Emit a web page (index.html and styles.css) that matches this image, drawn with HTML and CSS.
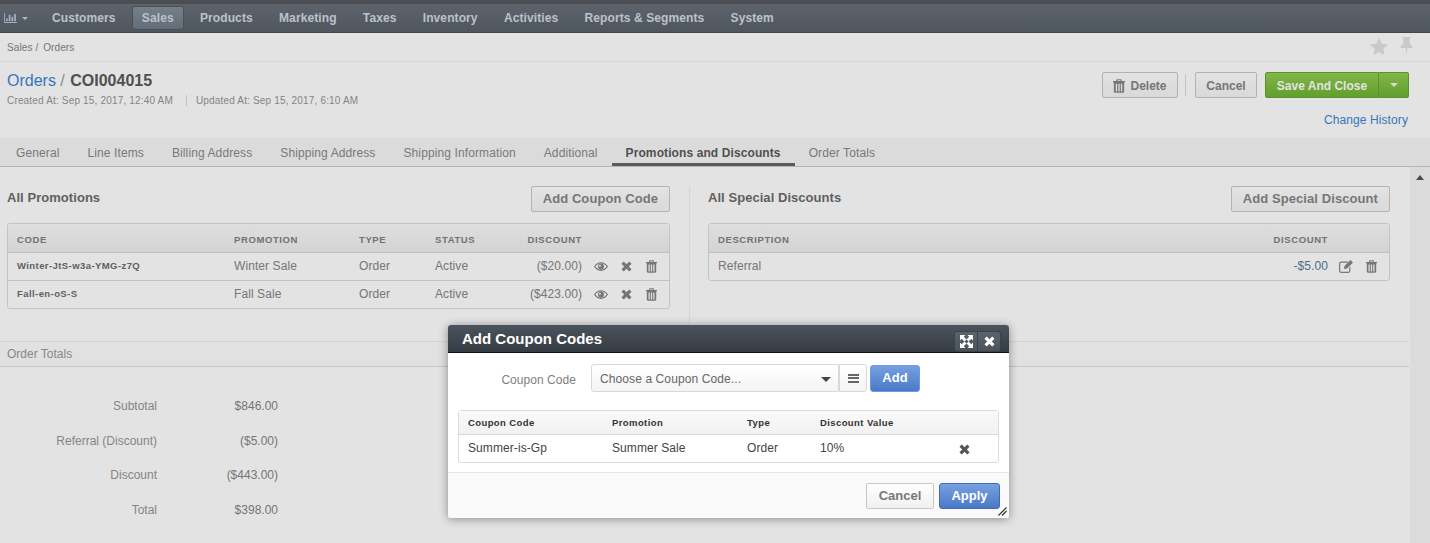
FILE: index.html
```html
<!DOCTYPE html>
<html lang="en">
<head>
    <meta charset="UTF-8">
    <meta name="viewport" content="width=device-width, initial-scale=1.0">
    <title>Orders - COI004015</title>
    <link rel="stylesheet" href="styles.css">
</head>
<body>

<svg class="sprite" xmlns="http://www.w3.org/2000/svg">
    <symbol id="i-trash" viewBox="0 0 14 16">
        <path d="M4.500 0h5l1 2.200H14V4h-1v10.500c0 .8-.6 1.500-1.400 1.500H2.400C1.600 16 1 15.300 1 14.500V4H0V2.200h3.500zM5.400 1.300l-.4.9h4l-.4-.9zM3.200 5.500v8.800h1.600V5.500zM6.200 5.500v8.800h1.600V5.500zM9.200 5.500v8.800h1.600V5.500z" fill-rule="evenodd"/>
    </symbol>
    <symbol id="i-times" viewBox="0 0 12 12">
        <path d="M3 .5l3 3 3-3L11.500 3l-3 3 3 3L9 11.500l-3-3-3 3L.5 9l3-3-3-3z"/>
    </symbol>
    <symbol id="i-eye" viewBox="0 0 16 10">
        <path d="M8 0c3.400 0 6.300 2 8 5-1.700 3-4.600 5-8 5s-6.300-2-8-5c1.700-3 4.600-5 8-5zM1.500 5C3 2.800 5.300 1.300 8 1.300S13 2.800 14.500 5C13 7.200 10.700 8.700 8 8.700S3 7.200 1.500 5zM8 1.600a3.400 3.400 0 1 0 0 6.800 3.400 3.400 0 0 0 0-6.800zM6.800 3a1.100 1.100 0 1 1-1.100 1.100A1.100 1.100 0 0 1 6.800 3z" fill-rule="evenodd"/>
    </symbol>
    <symbol id="i-edit" viewBox="0 0 14 13">
        <path d="M2 1.500h7.500L8.300 2.700H2.200c-.5 0-1 .4-1 1v7c0 .6.500 1 1 1h7c.6 0 1-.4 1-1V7.800l1.200-1.200v4.200c0 1.200-1 2.200-2.200 2.200H2.200C1 13 0 12 0 10.800V3.700C0 2.500 1 1.500 2 1.500zM11.500 0L14 2.500 8 8.500 5 9l.5-3z" fill-rule="evenodd"/>
    </symbol>
</svg>

<div class="top-strip"></div>

<nav class="main-nav">
    <a class="nav-chart">
        <svg class="chart-icon" viewBox="0 0 14 11"><path d="M0 0h1v10h13v1H0zM2 6h2v3H2zM5 2h2v7H5zM8 4h2v5H8zM11 1h2v8h-2z"/></svg>
        <span class="caret caret-nav"></span>
    </a>
    <a class="nav-item">Customers</a>
    <a class="nav-item active">Sales</a>
    <a class="nav-item">Products</a>
    <a class="nav-item">Marketing</a>
    <a class="nav-item">Taxes</a>
    <a class="nav-item">Inventory</a>
    <a class="nav-item">Activities</a>
    <a class="nav-item">Reports &amp; Segments</a>
    <a class="nav-item">System</a>
</nav>

<div class="breadcrumb-bar">
    <div class="breadcrumb">Sales / <span class="crumb-last">Orders</span></div>
    <div class="fav-icons">
        <svg class="star-icon" viewBox="0 0 18 17"><path d="M9 0l2.700 5.800 6.300.7-4.700 4.300 1.300 6.200L9 13.900 3.400 17l1.300-6.200L0 6.500l6.300-.7z"/></svg>
        <svg class="pin-icon" viewBox="0 0 13 18"><path d="M2.500 0h8v1.500H9.500V7c1.900.9 3 2.200 3 4H7.300l-.8 7-.8-7H.5c0-1.800 1.100-3.100 3-4V1.500h-1z"/></svg>
    </div>
</div>

<header class="page-head">
    <div class="head-left">
        <h1 class="page-title"><a>Orders</a> <span class="slash">/</span> <b>COI004015</b></h1>
        <div class="page-meta">
            <span>Created At: Sep 15, 2017, 12:40 AM</span>
            <span class="meta-updated">Updated At: Sep 15, 2017, 6:10 AM</span>
        </div>
    </div>
    <div class="head-right">
        <div class="head-actions">
            <button class="btn btn-delete"><svg class="icon-trash-btn"><use href="#i-trash"/></svg>Delete</button>
            <span class="actions-sep"></span>
            <button class="btn btn-cancel">Cancel</button>
            <div class="btn-split">
                <button class="btn-save">Save And Close</button>
                <button class="btn-save-caret"><span class="caret caret-white"></span></button>
            </div>
        </div>
        <a class="history-link">Change History</a>
    </div>
</header>

<div class="tabs">
    <a class="tab">General</a>
    <a class="tab">Line Items</a>
    <a class="tab">Billing Address</a>
    <a class="tab">Shipping Address</a>
    <a class="tab">Shipping Information</a>
    <a class="tab">Additional</a>
    <a class="tab active">Promotions and Discounts</a>
    <a class="tab">Order Totals</a>
</div>

<div class="content-wrap">
    <main class="content">
        <div class="panels">
            <section class="panel panel-left">
                <div class="panel-head">
                    <h2>All Promotions</h2>
                    <button class="btn-big">Add Coupon Code</button>
                </div>
                <table class="grid grid-promos">
                    <thead>
                        <tr><th>Code</th><th>Promotion</th><th>Type</th><th>Status</th><th class="num">Discount</th><th></th></tr>
                    </thead>
                    <tbody>
                        <tr>
                            <td class="code">Winter-JtS-w3a-YMG-z7Q</td><td>Winter Sale</td><td>Order</td><td>Active</td><td class="num">($20.00)</td>
                            <td class="row-icons"><svg class="ico-eye"><use href="#i-eye"/></svg><svg class="ico-x"><use href="#i-times"/></svg><svg class="ico-trash"><use href="#i-trash"/></svg></td>
                        </tr>
                        <tr>
                            <td class="code">Fall-en-oS-S</td><td>Fall Sale</td><td>Order</td><td>Active</td><td class="num">($423.00)</td>
                            <td class="row-icons"><svg class="ico-eye"><use href="#i-eye"/></svg><svg class="ico-x"><use href="#i-times"/></svg><svg class="ico-trash"><use href="#i-trash"/></svg></td>
                        </tr>
                    </tbody>
                </table>
            </section>
            <section class="panel panel-right">
                <div class="panel-head">
                    <h2>All Special Discounts</h2>
                    <button class="btn-big">Add Special Discount</button>
                </div>
                <table class="grid grid-special">
                    <thead>
                        <tr><th>Description</th><th class="num">Discount</th><th></th></tr>
                    </thead>
                    <tbody>
                        <tr>
                            <td>Referral</td><td class="num blue-num">-$5.00</td>
                            <td class="row-icons"><svg class="ico-edit"><use href="#i-edit"/></svg><svg class="ico-trash"><use href="#i-trash"/></svg></td>
                        </tr>
                    </tbody>
                </table>
            </section>
        </div>

        <div class="section-title">Order Totals</div>
        <dl class="totals">
            <div class="total-row"><dt>Subtotal</dt><dd>$846.00</dd></div>
            <div class="total-row"><dt>Referral (Discount)</dt><dd>($5.00)</dd></div>
            <div class="total-row"><dt>Discount</dt><dd>($443.00)</dd></div>
            <div class="total-row"><dt>Total</dt><dd>$398.00</dd></div>
        </dl>
    </main>
    <aside class="scrollbar"><span class="scroll-up"></span></aside>
</div>

<div class="overlay"></div>

<div class="dialog">
    <div class="dialog-title">
        <span>Add Coupon Codes</span>
        <div class="dialog-tools">
            <button class="tool-btn">
                <svg class="ico-expand" viewBox="0 0 13 13"><path d="M0 0h5.500L3.800 1.700 6.500 4.400 4.400 6.500 1.700 3.800 0 5.500zM13 0v5.500l-1.700-1.700-2.700 2.700-2.100-2.100 2.700-2.700L7.500 0zM0 13V7.500l1.700 1.700 2.700-2.700 2.100 2.100-2.700 2.700L5.500 13zM13 13H7.500l1.700-1.700-2.700-2.700 2.100-2.100 2.700 2.700L13 7.500z"/></svg>
            </button>
            <button class="tool-btn"><svg class="ico-close"><use href="#i-times"/></svg></button>
        </div>
    </div>
    <div class="dialog-body">
        <div class="coupon-row">
            <label class="coupon-label">Coupon Code</label>
            <div class="coupon-select">
                <span>Choose a Coupon Code...</span>
                <span class="caret caret-dark"></span>
            </div>
            <button class="list-btn"><span class="bars"></span></button>
            <button class="btn-blue btn-add">Add</button>
        </div>
        <table class="grid grid-coupons">
            <thead>
                <tr><th>Coupon Code</th><th>Promotion</th><th>Type</th><th>Discount Value</th><th></th></tr>
            </thead>
            <tbody>
                <tr>
                    <td>Summer-is-Gp</td><td>Summer Sale</td><td>Order</td><td>10%</td>
                    <td><svg class="ico-remove"><use href="#i-times"/></svg></td>
                </tr>
            </tbody>
        </table>
    </div>
    <div class="dialog-foot">
        <button class="btn-plain">Cancel</button>
        <button class="btn-blue btn-apply">Apply</button>
    </div>
    <svg class="resize-grip" viewBox="0 0 9 9"><path d="M8.500 0.500l-8 8M8.500 4l-4.500 4.500" stroke="#333" stroke-width="1.200" fill="none"/></svg>
</div>

</body>
</html>
```

FILE: styles.css
```css
* {
    box-sizing: border-box;
}
html, body {
    height: 543px;
    overflow: hidden;
}
body {
    font-family: "Liberation Sans", Arial, sans-serif;
    font-size: 12px;
    margin: 0;
    background: #fff;
    color: #666;
    position: relative;
}
button {
    font-family: inherit;
    cursor: pointer;
}
.sprite {
    display: none;
}
.caret {
    display: inline-block;
    width: 0;
    height: 0;
    border-left: 4px solid transparent;
    border-right: 4px solid transparent;
    border-top: 4px solid #fff;
}

/* top bar */
.top-strip {
    height: 4px;
    background: #55595f;
}
.main-nav {
    height: 29px;
    display: flex;
    align-items: center;
    padding-left: 4px;
    background: linear-gradient(#687079, #5a6169);
    border-bottom: 1px solid #4a4f55;
}
.nav-chart {
    display: flex;
    align-items: center;
    gap: 5px;
    width: 38px;
    color: #c4cdd6;
}
.chart-icon {
    width: 13px;
    height: 10px;
    fill: #b5c4d6;
}
.caret-nav {
    border-left-width: 3px;
    border-right-width: 3px;
    border-top: 3px solid #c4cdd6;
}
.nav-item {
    font-size: 12px;
    font-weight: bold;
    letter-spacing: .1px;
    color: #d3dae1;
    padding: 4px 9px;
    margin: 0 6.250px 0 0;
    border: 1px solid transparent;
    border-radius: 3px;
    white-space: nowrap;
}
.nav-item.active {
    background: linear-gradient(#84909b, #6f7a85);
    border-color: #535a62;
}

/* breadcrumb */
.breadcrumb-bar {
    height: 29px;
    display: flex;
    justify-content: space-between;
    align-items: center;
    padding: 0 17px 0 7px;
    background: #fff;
    border-bottom: 1px solid #f3f3f3;
}
.breadcrumb {
    font-size: 10px;
    letter-spacing: .1px;
    color: #858585;
}
.crumb-last {
    margin-left: 2px;
}
.fav-icons {
    display: flex;
    align-items: center;
    gap: 12px;
    margin-top: -2px;
}
.star-icon {
    width: 18px;
    height: 17px;
    fill: #e2e2e2;
}
.pin-icon {
    width: 13px;
    height: 18px;
    fill: #e2e2e2;
}

/* page head */
.page-head {
    height: 76px;
    display: flex;
    justify-content: space-between;
    padding: 10px 21px 0 7px;
}
.page-title {
    font-size: 16px;
    font-weight: normal;
    margin: 0;
    line-height: 18px;
    color: #999;
}
.page-title a {
    color: #3a86d4;
}
.page-title b {
    color: #5a5a5a;
    margin-left: 1px;
}
.page-meta {
    font-size: 10px;
    letter-spacing: .17px;
    color: #959595;
    margin-top: 5px;
    display: flex;
}
.meta-updated {
    margin-left: 13px;
    padding-left: 9px;
    border-left: 1px solid #ddd;
}
.head-right {
    display: flex;
    flex-direction: column;
    align-items: flex-end;
}
.head-actions {
    display: flex;
    align-items: center;
}
.btn {
    height: 26px;
    padding: 1px 0 0;
    font-size: 12px;
    font-weight: bold;
    color: #858585;
    background: linear-gradient(#fff, #f4f4f4);
    border: 1px solid #c8c8c8;
    border-radius: 2px;
    display: flex;
    align-items: center;
    justify-content: center;
}
.btn-delete {
    width: 76px;
}
.icon-trash-btn {
    width: 12px;
    height: 14px;
    margin-right: 5px;
    fill: #858585;
}
.actions-sep {
    width: 1px;
    height: 22px;
    background: #ddd;
    margin: 0 9px 0 7px;
}
.btn-cancel {
    width: 62px;
}
.btn-split {
    display: flex;
    height: 26px;
    margin-left: 8px;
}
.btn-save, .btn-save-caret {
    height: 26px;
    font-size: 12px;
    font-weight: bold;
    color: #fff;
    background: linear-gradient(#92ce4e, #6eb334);
    border: 1px solid #69a336;
}
.btn-save {
    width: 114px;
    padding: 1px 0 0;
    border-radius: 2px 0 0 2px;
}
.btn-save-caret {
    width: 30px;
    border-left: 0;
    border-radius: 0 2px 2px 0;
    padding: 0;
    display: flex;
    align-items: center;
    justify-content: center;
}
.caret-white {
    border-top-color: #f2f2f2;
}
.history-link {
    font-size: 12px;
    letter-spacing: .1px;
    color: #3a86d4;
    margin: 15px 1px 0 0;
}

/* tabs */
.tabs {
    height: 29px;
    display: flex;
    padding-left: 2px;
    background: #f7f7f7;
    border-bottom: 1px solid #ccc;
}
.tab {
    height: 28px;
    line-height: 30px;
    padding: 0 14px;
    font-size: 12px;
    letter-spacing: .11px;
    color: #888;
    white-space: nowrap;
}
.tab.active {
    font-weight: bold;
    color: #5a5a5a;
    letter-spacing: .1px;
    border-bottom: 3px solid #666;
}

/* content */
.content-wrap {
    display: flex;
    height: 376px;
}
.content {
    flex: 1;
    min-width: 0;
}
.scrollbar {
    width: 20px;
    background: #f7f7f7;
    margin-left: 1px;
    display: flex;
    justify-content: center;
    padding-top: 8px;
}
.scroll-up {
    width: 0;
    height: 0;
    border-left: 4.500px solid transparent;
    border-right: 4.500px solid transparent;
    border-bottom: 5px solid #555;
}
.panels {
    display: flex;
    height: 174px;
    padding-top: 19px;
}
.panel-left {
    width: 690px;
    padding: 0 19px 0 7px;
    border-right: 1px solid #f0f0f0;
    height: 139px;
}
.panel-right {
    flex: 1;
    padding: 0 19px 0 18px;
}
.panel-head {
    display: flex;
    justify-content: space-between;
    align-items: center;
    height: 26px;
    margin-bottom: 11px;
}
.panel-head h2 {
    font-size: 13px;
    font-weight: bold;
    letter-spacing: .05px;
    margin: 0 0 3px;
    color: #6c6c6c;
}
.btn-big {
    height: 26px;
    width: auto;
    padding: 0 11px 2px;
    font-size: 13px;
    letter-spacing: .08px;
    font-weight: bold;
    color: #858585;
    background: linear-gradient(#fff, #f5f5f5);
    border: 1px solid #c9c9c9;
    border-radius: 2px;
}

/* tables */
.grid {
    width: 100%;
    table-layout: fixed;
    border-collapse: separate;
    border-spacing: 0;
    border: 1px solid #dcdcdc;
    border-radius: 3px;
}
.grid th {
    height: 29px;
    padding: 2px 9px 0;
    font-size: 9.500px;
    font-weight: bold;
    letter-spacing: .6px;
    text-transform: uppercase;
    text-align: left;
    color: #808080;
    background: linear-gradient(#fafafa, #eeeeee);
    border-bottom: 1px solid #d9d9d9;
}
.grid td {
    height: 28px;
    padding: 0 9px 2px;
    font-size: 12px;
    letter-spacing: .08px;
    color: #858585;
    border-bottom: 1px solid #d9d9d9;
    white-space: nowrap;
}
.grid tr:last-child td {
    height: 27px;
    border-bottom: 0;
}
.grid .num {
    text-align: right;
    padding-right: 0;
}
.grid .code {
    font-size: 9.500px;
    font-weight: bold;
    letter-spacing: .42px;
    color: #6c6c6c;
}
.grid .blue-num {
    color: #5c7a94;
}
.grid-promos th:nth-child(1) { width: 217px; }
.grid-promos th:nth-child(2) { width: 125px; }
.grid-promos th:nth-child(3) { width: 76px; }
.grid-promos th:nth-child(4) { width: 78px; }
.grid-promos th:nth-child(5) { width: 78px; }
.grid-special th:nth-child(2) { width: 130px; }
.grid-special th:nth-child(3) { width: 61px; }
.row-icons {
    padding: 0 !important;
    text-align: left;
}
.row-icons svg {
    vertical-align: middle;
    margin-bottom: 1px;
    fill: #858585;
}
.ico-eye {
    width: 14px;
    height: 9px;
    margin-left: 12px;
}
.ico-x {
    width: 11px;
    height: 11px;
    margin-left: 13px;
}
.ico-trash {
    width: 11px;
    height: 13px;
    margin-left: 14px;
}
.ico-edit {
    width: 14px;
    height: 13px;
    margin-left: 11px;
}
.grid-special .ico-trash {
    margin-left: 13px;
}

/* order totals */
.section-title {
    height: 26px;
    line-height: 24px;
    padding-left: 7px;
    font-size: 12px;
    color: #999;
    background: #fdfdfd;
    border-top: 1px solid #eee;
    border-bottom: 1px solid #ddd;
}
.totals {
    margin: 0;
    padding-top: 22px;
}
.total-row {
    display: flex;
    height: 34.700px;
    line-height: 34.700px;
}
.total-row dt {
    width: 157px;
    text-align: right;
    color: #969696;
}
.total-row dd {
    width: 121px;
    margin: 0;
    text-align: right;
    color: #858585;
}

/* dialog */
.overlay {
    position: absolute;
    left: 0;
    top: 0;
    right: 0;
    bottom: 0;
    background: rgba(0, 0, 0, .11);
}
.dialog {
    position: absolute;
    left: 448px;
    top: 325px;
    width: 561px;
    height: 193px;
    background: #fff;
    border-radius: 3px;
    box-shadow: 0 1px 10px rgba(0, 0, 0, .4);
}
.dialog-title {
    height: 28px;
    display: flex;
    justify-content: space-between;
    align-items: center;
    padding: 0 8px 0 14px;
    background: linear-gradient(#4b535d, #363c43);
    border-bottom: 1px solid #111;
    border-radius: 3px 3px 0 0;
    color: #fff;
    font-size: 15px;
    font-weight: bold;
}
.dialog-tools {
    display: flex;
    margin-top: 6px;
    align-self: flex-start;
}
.tool-btn {
    width: 24px;
    height: 21px;
    padding: 0;
    background: linear-gradient(#5b646e, #4a525a);
    border: 1px solid #3c4249;
    border-radius: 3px 0 0 3px;
    display: flex;
    align-items: center;
    justify-content: center;
}
.tool-btn + .tool-btn {
    width: 23px;
    border-left: 0;
    border-radius: 0 3px 3px 0;
}
.ico-expand {
    width: 13px;
    height: 13px;
    fill: #fff;
}
.ico-close {
    width: 11px;
    height: 11px;
    fill: #fff;
}
.dialog-body {
    height: 119px;
    padding: 11px 10px 0;
}
.coupon-row {
    display: flex;
    align-items: center;
    height: 28px;
    margin-bottom: 18px;
}
.coupon-label {
    width: 118px;
    text-align: right;
    font-size: 12px;
    letter-spacing: .05px;
    color: #808080;
    margin-top: 4px;
}
.coupon-select {
    width: 248px;
    height: 28px;
    margin-left: 15px;
    padding: 2px 7px 0 8px;
    display: flex;
    align-items: center;
    justify-content: space-between;
    font-size: 12px;
    letter-spacing: .1px;
    color: #666;
    background: linear-gradient(#fff, #f4f4f4);
    border: 1px solid #d8d8d8;
    border-radius: 3px 0 0 3px;
}
.caret-dark {
    border-left-width: 5px;
    border-right-width: 5px;
    border-top: 5px solid #444;
}
.list-btn {
    width: 28px;
    height: 28px;
    padding: 0;
    background: linear-gradient(#fff, #f4f4f4);
    border: 1px solid #d8d8d8;
    border-radius: 0 3px 3px 0;
    display: flex;
    align-items: center;
    justify-content: center;
}
.bars {
    width: 11px;
    height: 9px;
    border-top: 2px solid #666;
    border-bottom: 2px solid #666;
    position: relative;
}
.bars::after {
    content: "";
    position: absolute;
    left: 0;
    right: 0;
    top: 1.500px;
    height: 2px;
    background: #666;
}
.btn-blue {
    font-weight: bold;
    font-size: 13px;
    padding: 0 0 2px;
    color: #fff;
    background: linear-gradient(#77a0e0, #4a79c8);
    border: 1px solid #3f6cb6;
    border-radius: 3px;
}
.btn-add {
    width: 50px;
    height: 27px;
    margin-left: 3px;
    border-color: #6d9be0;
}
.grid-coupons {
    height: 53px;
}
.grid-coupons th {
    height: 24px;
    padding-top: 0;
    font-size: 9.500px;
    letter-spacing: .4px;
    text-transform: none;
    color: #333;
    background: linear-gradient(#fafafa, #f1f1f1);
}
.grid-coupons td {
    color: #444;
}
.grid-coupons th:nth-child(1) { width: 144px; }
.grid-coupons th:nth-child(2) { width: 135px; }
.grid-coupons th:nth-child(3) { width: 73px; }
.grid-coupons th:nth-child(4) { width: 130px; }
.ico-remove {
    width: 11px;
    height: 11px;
    fill: #555;
    margin: 3px 0 0 9px;
    vertical-align: middle;
}
.dialog-foot {
    height: 46px;
    display: flex;
    justify-content: flex-end;
    gap: 5px;
    padding: 10px 9px 0 0;
    background: #fafafa;
    border-top: 1px solid #e5e5e5;
    border-radius: 0 0 3px 3px;
}
.btn-plain {
    width: 68px;
    height: 26px;
    font-size: 13px;
    font-weight: bold;
    padding: 0 0 2px;
    color: #777;
    background: linear-gradient(#fff, #f1f1f1);
    border: 1px solid #c8c8c8;
    border-radius: 2px;
}
.btn-apply {
    width: 61px;
    height: 26px;
}
.resize-grip {
    position: absolute;
    right: 2px;
    bottom: 2px;
    width: 9px;
    height: 9px;
}
```
